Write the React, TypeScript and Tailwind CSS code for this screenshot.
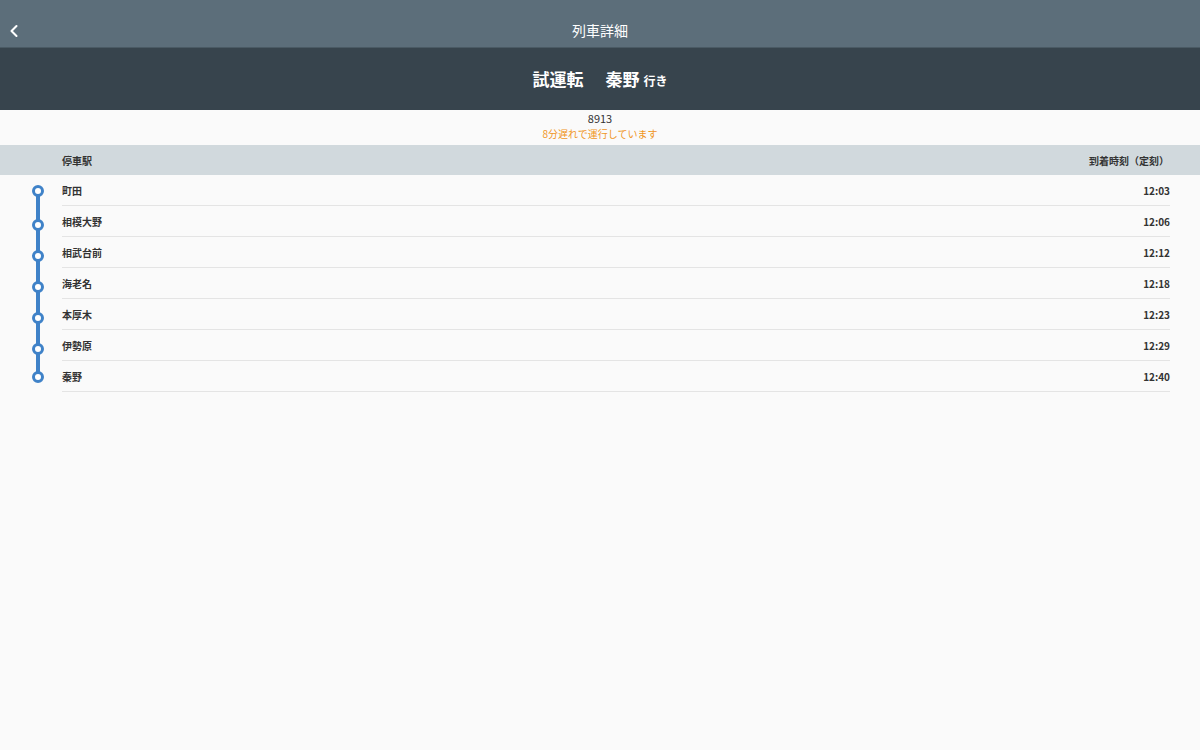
import { ChevronLeft } from 'lucide-react'

const stops = [
  { name: '町田', time: '12:03' },
  { name: '相模大野', time: '12:06' },
  { name: '相武台前', time: '12:12' },
  { name: '海老名', time: '12:18' },
  { name: '本厚木', time: '12:23' },
  { name: '伊勢原', time: '12:29' },
  { name: '秦野', time: '12:40' },
]

export default function App() {
  return (
    <div
      className="min-h-[750px] bg-[#fafafa] text-[#333]"
      style={{ fontFamily: '"Noto Sans CJK JP", "Noto Sans", sans-serif' }}
    >
      {/* Nav bar */}
      <div className="relative h-12 bg-[#5c6e7a] border-b border-[#4a5a64] flex items-center justify-center">
        <button className="absolute left-[4px] top-[21px] text-white">
          <ChevronLeft size={20} strokeWidth={2.5} />
        </button>
        <span className="text-white text-[14px] pt-[14px]">列車詳細</span>
      </div>

      {/* Train heading */}
      <div className="h-[62px] bg-[#37444d] flex items-center justify-center text-white">
        <span className="text-[17px] font-bold">試運転</span>
        <span className="ml-[22px] text-[17px] font-bold">秦野</span>
        <span className="ml-[4px] mt-[4px] text-[12px] font-bold">行き</span>
      </div>

      {/* Status */}
      <div className="h-[35px] flex flex-col items-center">
        <span className="text-[11px] leading-[16px]">8913</span>
        <span className="text-[10px] leading-[16px] text-[#f0961e]">8分遅れで運行しています</span>
      </div>

      {/* Table header */}
      <div className="h-[30px] bg-[#d1d9dd] flex items-center pl-[62px] pr-[31px] text-[10px] font-bold">
        <span className="flex-1">停車駅</span>
        <span>到着時刻（定刻）</span>
      </div>

      {/* Stops */}
      <div className="relative">
        <div className="absolute left-[36px] top-[15px] h-[186px] w-[4px] bg-[#3f82c8]" />
        {stops.map((s, i) => {
          const shift = i === 0 || i === stops.length - 1 ? 'top-[10px]' : 'top-[13px]'
          return (
            <div key={s.name} className="relative h-[31px] flex">
              <span
                className={`absolute left-[32px] ${shift} w-[12px] h-[12px] rounded-full border-[3px] border-[#3f82c8] bg-white`}
              />
              <div className="ml-[62px] mr-[30px] flex-1 flex items-center border-b border-[#e4e4e4] text-[10px] font-bold">
                <span className="flex-1">{s.name}</span>
                <span>{s.time}</span>
              </div>
            </div>
          )
        })}
      </div>
    </div>
  )
}
